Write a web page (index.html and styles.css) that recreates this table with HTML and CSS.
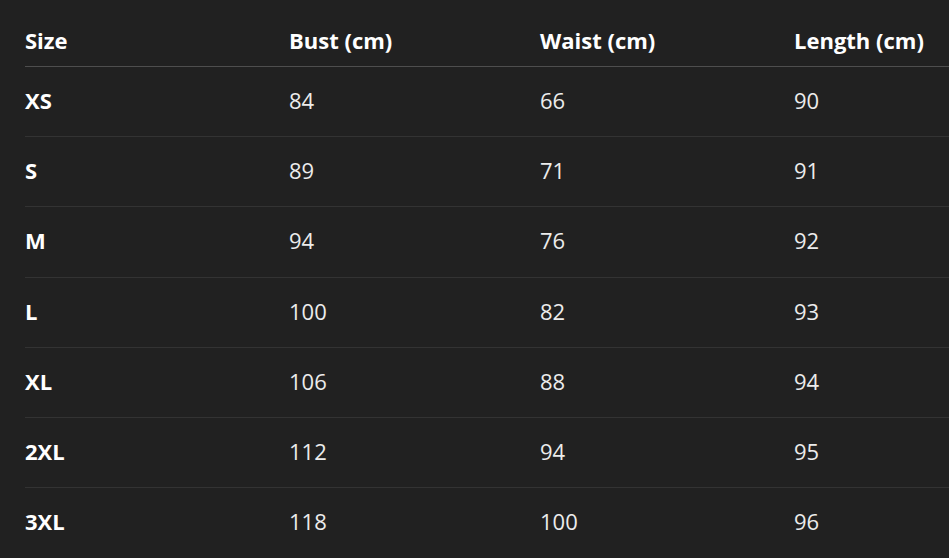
FILE: index.html
```html
<!DOCTYPE html>
<html>
<head>
<meta charset="utf-8">
<link rel="stylesheet" href="styles.css">
</head>
<body>
<div class="wrap">
<table class="size-table">
<thead>
<tr><th class="c1">Size</th><th class="c2">Bust (cm)</th><th class="c3">Waist (cm)</th><th class="c4">Length (cm)</th></tr>
</thead>
<tbody>
<tr><td class="size">XS</td><td>84</td><td>66</td><td>90</td></tr>
<tr><td class="size">S</td><td>89</td><td>71</td><td>91</td></tr>
<tr><td class="size">M</td><td>94</td><td>76</td><td>92</td></tr>
<tr><td class="size">L</td><td>100</td><td>82</td><td>93</td></tr>
<tr><td class="size">XL</td><td>106</td><td>88</td><td>94</td></tr>
<tr><td class="size">2XL</td><td>112</td><td>94</td><td>95</td></tr>
<tr><td class="size">3XL</td><td>118</td><td>100</td><td>96</td></tr>
</tbody>
</table>
</div>
</body>
</html>
```
FILE: styles.css
```css
html, body {
  margin: 0;
  padding: 0;
  background: #212121;
  overflow: hidden;
}
.wrap {
  padding: 14px 0 0 25px;
}
.size-table {
  border-collapse: collapse;
  width: 924px;
  table-layout: fixed;
  font-family: "Open Sans", "Noto Sans", sans-serif;
  font-size: 22px;
  line-height: 28px;
  color: #ececec;
}
.c1 { width: 264px; }
.c2 { width: 251px; }
.c3 { width: 254px; }
.c4 { width: auto; }
th {
  text-align: left;
  font-weight: 700;
  color: #ffffff;
  padding: 12px 0 12px 0;
  border-bottom: 1px solid #4e4e4e;
  white-space: nowrap;
}
td {
  padding: 19px 0 22.2px 0;
  border-bottom: 1px solid #333333;
  white-space: nowrap;
}
tbody tr:last-child td {
  border-bottom: none;
}
td.size {
  font-weight: 700;
  color: #ffffff;
}
```
